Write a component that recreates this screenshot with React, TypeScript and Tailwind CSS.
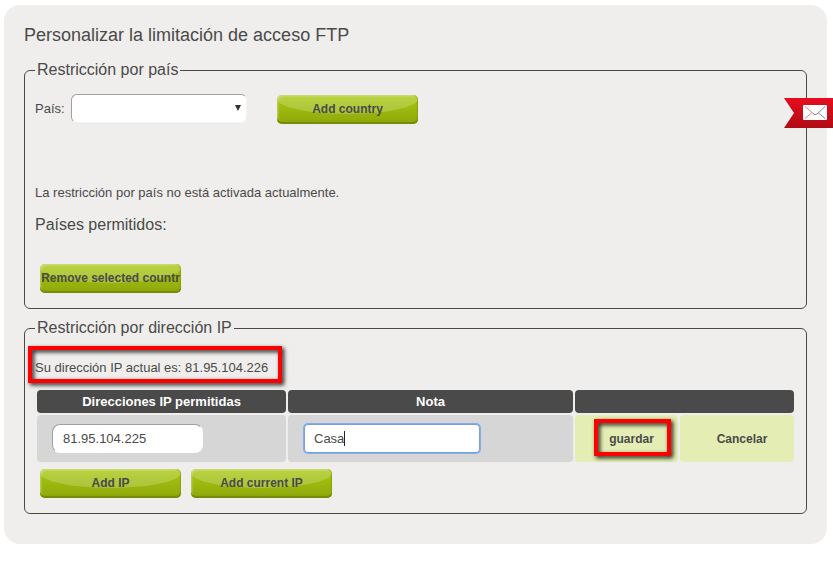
import { useState } from 'react'
import type { ReactNode } from 'react'

function GlossyButton({ children }: { children: ReactNode }) {
  return (
    <button
      type="button"
      className="relative block h-[29px] w-[141px] overflow-hidden whitespace-nowrap rounded-[5px] bg-linear-to-b from-[#a8ca0f] to-[#8fa70b] pb-[2px] text-center text-[12px] font-bold leading-[26px] text-[#4a4a4a] shadow-[inset_0_-2px_1px_#768a08,inset_-1px_0_1px_#8ba30c,inset_1px_1px_2px_#c9da78]"
    >
      <span className="absolute inset-x-0 top-0 h-[19px] bg-white/20 [border-radius:0_0_50%_50%/0_0_80%_80%]" />
      <span className="relative">{children}</span>
    </button>
  )
}

// Red frame laid over the element that the user should look at
function Highlight({ className }: { className: string }) {
  return (
    <span
      className={`pointer-events-none absolute border-4 border-[#fe0000] drop-shadow-[2px_2px_2px_rgba(0,0,0,0.9)] ${className}`}
    />
  )
}

function CountryFieldset() {
  const [country, setCountry] = useState('')

  return (
    <fieldset className="rounded-[6px] border border-[#4a4a4a] px-[10px] pb-[15px]">
      <legend className="px-[2px] text-[16px] leading-5">Restricción por país</legend>

      <div className="flex items-start pt-[14px]">
        <label htmlFor="country" className="w-9 leading-[30px]">
          País:
        </label>
        <div className="relative">
          <select
            id="country"
            value={country}
            onChange={(e) => setCountry(e.target.value)}
            className="block h-[29px] w-44 appearance-none rounded-[6px] border border-b-[#f4f4f4] border-l-[#a0a0a0] border-r-[#f4f4f4] border-t-[#a0a0a0] bg-white px-2"
          >
            <option value=""></option>
          </select>
          <svg
            viewBox="0 0 6 6"
            className="pointer-events-none absolute right-[6px] top-[11px] h-[6px] w-[6px]"
          >
            <path d="M0 0h6L3 6z" fill="#333" />
          </svg>
        </div>
        <div className="pl-[30px] pt-px">
          <GlossyButton>Add country</GlossyButton>
        </div>
      </div>

      <p className="pt-[60px]">La restricción por país no está activada actualmente.</p>
      <h2 className="pt-[13px] text-[16px] leading-5">Países permitidos:</h2>
      <div className="flex pl-[5px] pt-[29px]">
        <GlossyButton>Remove selected countr</GlossyButton>
      </div>
    </fieldset>
  )
}

function IpFieldset() {
  const [ip, setIp] = useState('81.95.104.225')
  const [note, setNote] = useState('Casa')

  return (
    <fieldset className="mt-[9px] rounded-[6px] border border-[#4a4a4a] px-[10px] pb-[15px]">
      <legend className="px-[2px] text-[16px] leading-5">Restricción por dirección IP</legend>

      <div className="flex pt-[21px]">
        <p className="relative">
          Su dirección IP actual es: 81.95.104.226
          <Highlight className="-bottom-[6px] -left-[7px] -right-[14px] -top-[13px]" />
        </p>
      </div>

      <table className="mt-[11px] w-full table-fixed border-separate border-spacing-[2px]">
        <colgroup>
          <col className="w-[249px]" />
          <col />
          <col className="w-[103px]" />
          <col className="w-[114px]" />
        </colgroup>
        <thead>
          <tr className="h-[23px] text-[13px] text-white">
            <th className="rounded-[4px] bg-[#4a4a4a]">Direcciones IP permitidas</th>
            <th className="rounded-[4px] bg-[#4a4a4a]">Nota</th>
            <th colSpan={2} className="rounded-[4px] bg-[#4a4a4a]" />
          </tr>
        </thead>
        <tbody>
          <tr className="h-[47px]">
            <td className="rounded-[4px] bg-[#d6d6d6] px-[15px]">
              <input
                type="text"
                aria-label="Dirección IP"
                value={ip}
                onChange={(e) => setIp(e.target.value)}
                className="block h-[29px] w-[151px] rounded-[8px] border border-b-white border-l-[#a0a0a0] border-r-white border-t-[#a0a0a0] bg-white px-[10px]"
              />
            </td>
            <td className="rounded-[4px] bg-[#d6d6d6] px-4">
              <div className="relative w-44">
                <input
                  type="text"
                  aria-label="Nota"
                  value={note}
                  onChange={(e) => setNote(e.target.value)}
                  className="block h-[29px] w-full rounded-[4px] border border-[#7a9fe0] bg-white px-[9px] shadow-[0_0_0_1px_#86aceb] outline-none"
                />
                {/* Text cursor */}
                <span className="absolute left-10 top-[7px] h-[15px] w-px bg-[#222]" />
              </div>
            </td>
            <td className="rounded-[4px] bg-[#e4edb4] text-center">
              <button type="button" className="relative pl-[10px] text-[12px] font-bold">
                guardar
                <Highlight className="-bottom-2 -left-[5px] -right-[17px] -top-[11px]" />
              </button>
            </td>
            <td className="rounded-[4px] bg-[#e4edb4] text-center">
              <button type="button" className="pl-[10px] text-[12px] font-bold">
                Cancelar
              </button>
            </td>
          </tr>
        </tbody>
      </table>

      <div className="flex gap-[10px] pl-[5px] pt-[5px]">
        <GlossyButton>Add IP</GlossyButton>
        <GlossyButton>Add current IP</GlossyButton>
      </div>
    </fieldset>
  )
}

function MailRibbon() {
  return (
    <a href="#contacto" aria-label="Contacto" className="fixed right-0 top-[98px]">
      <svg viewBox="0 0 49 30" className="block h-[30px] w-[49px]">
        <defs>
          <linearGradient id="ribbon" x1="0" y1="0" x2="0" y2="1">
            <stop offset="0" stopColor="#e60d1d" />
            <stop offset="1" stopColor="#b00c16" />
          </linearGradient>
        </defs>
        <path d="M0 0h49v30H0l10-15z" fill="url(#ribbon)" />
        <rect x="19" y="7" width="24" height="15" rx="1" fill="#fff" />
        <path d="M21 8.500l10 8.500M21 20.500l7-6" fill="none" stroke="#e0848c" strokeWidth="1" />
        <path d="M41 8.500L33 16q-2 1.500-4-.5M41 20.500l-7-6" fill="none" stroke="#888" strokeWidth="1" />
      </svg>
    </a>
  )
}

export default function App() {
  return (
    <div className="bg-white pb-5 pl-1 pr-[6px] pt-[5px] font-['Liberation_Sans',Arial,sans-serif] text-[13px] leading-[18px] text-[#4a4a4a]">
      <main className="rounded-[16px] bg-[#efeeec] px-5 pb-[30px] pt-[18px]">
        <h1 className="pb-[13px] text-[18px] leading-6">Personalizar la limitación de acceso FTP</h1>
        <CountryFieldset />
        <IpFieldset />
      </main>
      <MailRibbon />
    </div>
  )
}
